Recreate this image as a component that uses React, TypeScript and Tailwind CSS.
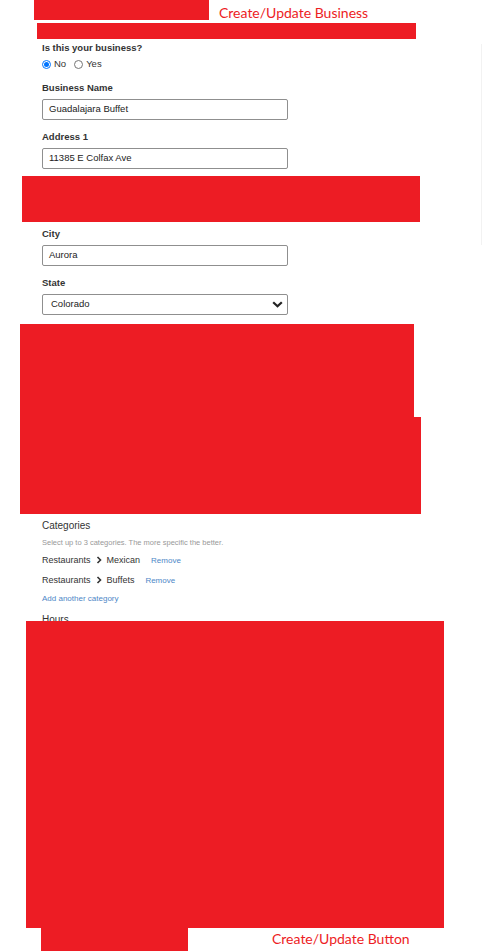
import type { ReactNode } from 'react'

const RED = 'bg-[#ed1c24]'

function Label({ children }: { children: ReactNode }) {
  return (
    <div className="h-[12px] text-[9.5px] font-bold leading-[12px] text-[#333]">
      {children}
    </div>
  )
}

function TextBox({ value }: { value: string }) {
  return (
    <div className="mt-[5px] flex h-[21px] w-[246px] items-center rounded-[2px] border border-[#8f8f8f] pl-[6px] text-[9.5px] text-[#222]">
      {value}
    </div>
  )
}

function Radio({ checked, label }: { checked?: boolean; label: string }) {
  return (
    <span className="flex items-center gap-[3px]">
      <span
        className={
          'flex size-[9px] items-center justify-center rounded-full border ' +
          (checked ? 'border-[#0075ff]' : 'border-[#767676]')
        }
      >
        {checked && <span className="size-[5px] rounded-full bg-[#0075ff]" />}
      </span>
      <span className="text-[9.5px] text-[#333]">{label}</span>
    </span>
  )
}

function Chevron() {
  return (
    <svg width="6" height="8" viewBox="0 0 6 8" className="mx-[5px]">
      <polyline points="1.5,1 4.5,4 1.5,7" fill="none" stroke="#333" strokeWidth="1.6" />
    </svg>
  )
}

function CategoryRow({ name, mt }: { name: string; mt: string }) {
  return (
    <div className={'flex h-[12px] items-center ' + mt}>
      <span className="text-[9px] leading-[12px] text-[#333]">Restaurants</span>
      <Chevron />
      <span className="text-[9px] leading-[12px] text-[#333]">{name}</span>
      <span className="ml-[11px] mt-[2px] text-[8px] text-[#4d87c7]">Remove</span>
    </div>
  )
}

export default function App() {
  return (
    <div className="flex min-h-[951px] w-[482px] flex-col bg-white font-['Liberation_Sans',Arial,sans-serif]">
      <div className="flex h-[20px] items-end">
        <div className={'ml-[34px] h-[20px] w-[175px] ' + RED} />
        <span className="ml-[10px] font-['Lato',sans-serif] text-[14px] leading-[15px] text-[#ed1c24]">
          Create/Update Business
        </span>
      </div>
      <div className={'ml-[37px] mt-[3px] h-[16px] w-[379px] ' + RED} />

      <div className="flex">
        <div className="flex flex-1 flex-col">
          <div className="ml-[42px] mt-[3px] flex flex-col">
            <Label>Is this your business?</Label>
            <div className="mt-[4px] flex h-[12px] items-center gap-[8px]">
              <Radio checked label="No" />
              <Radio label="Yes" />
            </div>
            <div className="mt-[12px]">
              <Label>Business Name</Label>
            </div>
            <TextBox value="Guadalajara Buffet" />
            <div className="mt-[11px]">
              <Label>Address 1</Label>
            </div>
            <TextBox value="11385 E Colfax Ave" />
          </div>

          <div className={'ml-[22px] mt-[7px] h-[46px] w-[398px] ' + RED} />

          <div className="ml-[42px] mt-[6px] flex flex-col">
            <Label>City</Label>
            <TextBox value="Aurora" />
          </div>
        </div>
        <div className="mt-[5px] h-[201px] w-px bg-[#f2f2f2]" />
      </div>

      <div className="ml-[42px] mt-[11px] flex flex-col">
        <Label>State</Label>
        <div className="mt-[5px] flex h-[21px] w-[246px] items-center justify-between rounded-[2px] border border-[#8f8f8f] pl-[8px] pr-[4px] text-[9.5px] text-[#222]">
          <span>Colorado</span>
          <svg width="11" height="7" viewBox="0 0 11 7">
            <polyline points="1.2,1.2 5.5,5.3 9.8,1.2" fill="none" stroke="#222" strokeWidth="2.2" />
          </svg>
        </div>
      </div>

      <div className={'ml-[20px] mt-[9px] h-[93px] w-[394px] ' + RED} />
      <div className={'ml-[20px] h-[97px] w-[401px] ' + RED} />

      <div className="ml-[42px] mt-[5px] flex flex-col">
        <div className="text-[10px] leading-[14px] text-[#333]">Categories</div>
        <div className="mt-[5px] text-[7.5px] leading-[10px] text-[#999]">
          Select up to 3 categories. The more specific the better.
        </div>
        <CategoryRow name="Mexican" mt="mt-[6px]" />
        <CategoryRow name="Buffets" mt="mt-[8px]" />
        <div className="mt-[8px] text-[8px] leading-[10px] text-[#4d87c7]">Add another category</div>
        <div className="mt-[9px] h-[8px] overflow-hidden text-[10px] leading-[14px] text-[#333]">Hours</div>
      </div>

      <div className={'ml-[26px] h-[307px] w-[418px] ' + RED} />

      <div className="flex h-[23px] items-start">
        <div className={'ml-[41px] h-[23px] w-[147px] ' + RED} />
        <span className="ml-[84px] mt-[3px] font-['Lato',sans-serif] text-[14px] leading-[15px] text-[#ed1c24]">
          Create/Update Button
        </span>
      </div>
    </div>
  )
}
